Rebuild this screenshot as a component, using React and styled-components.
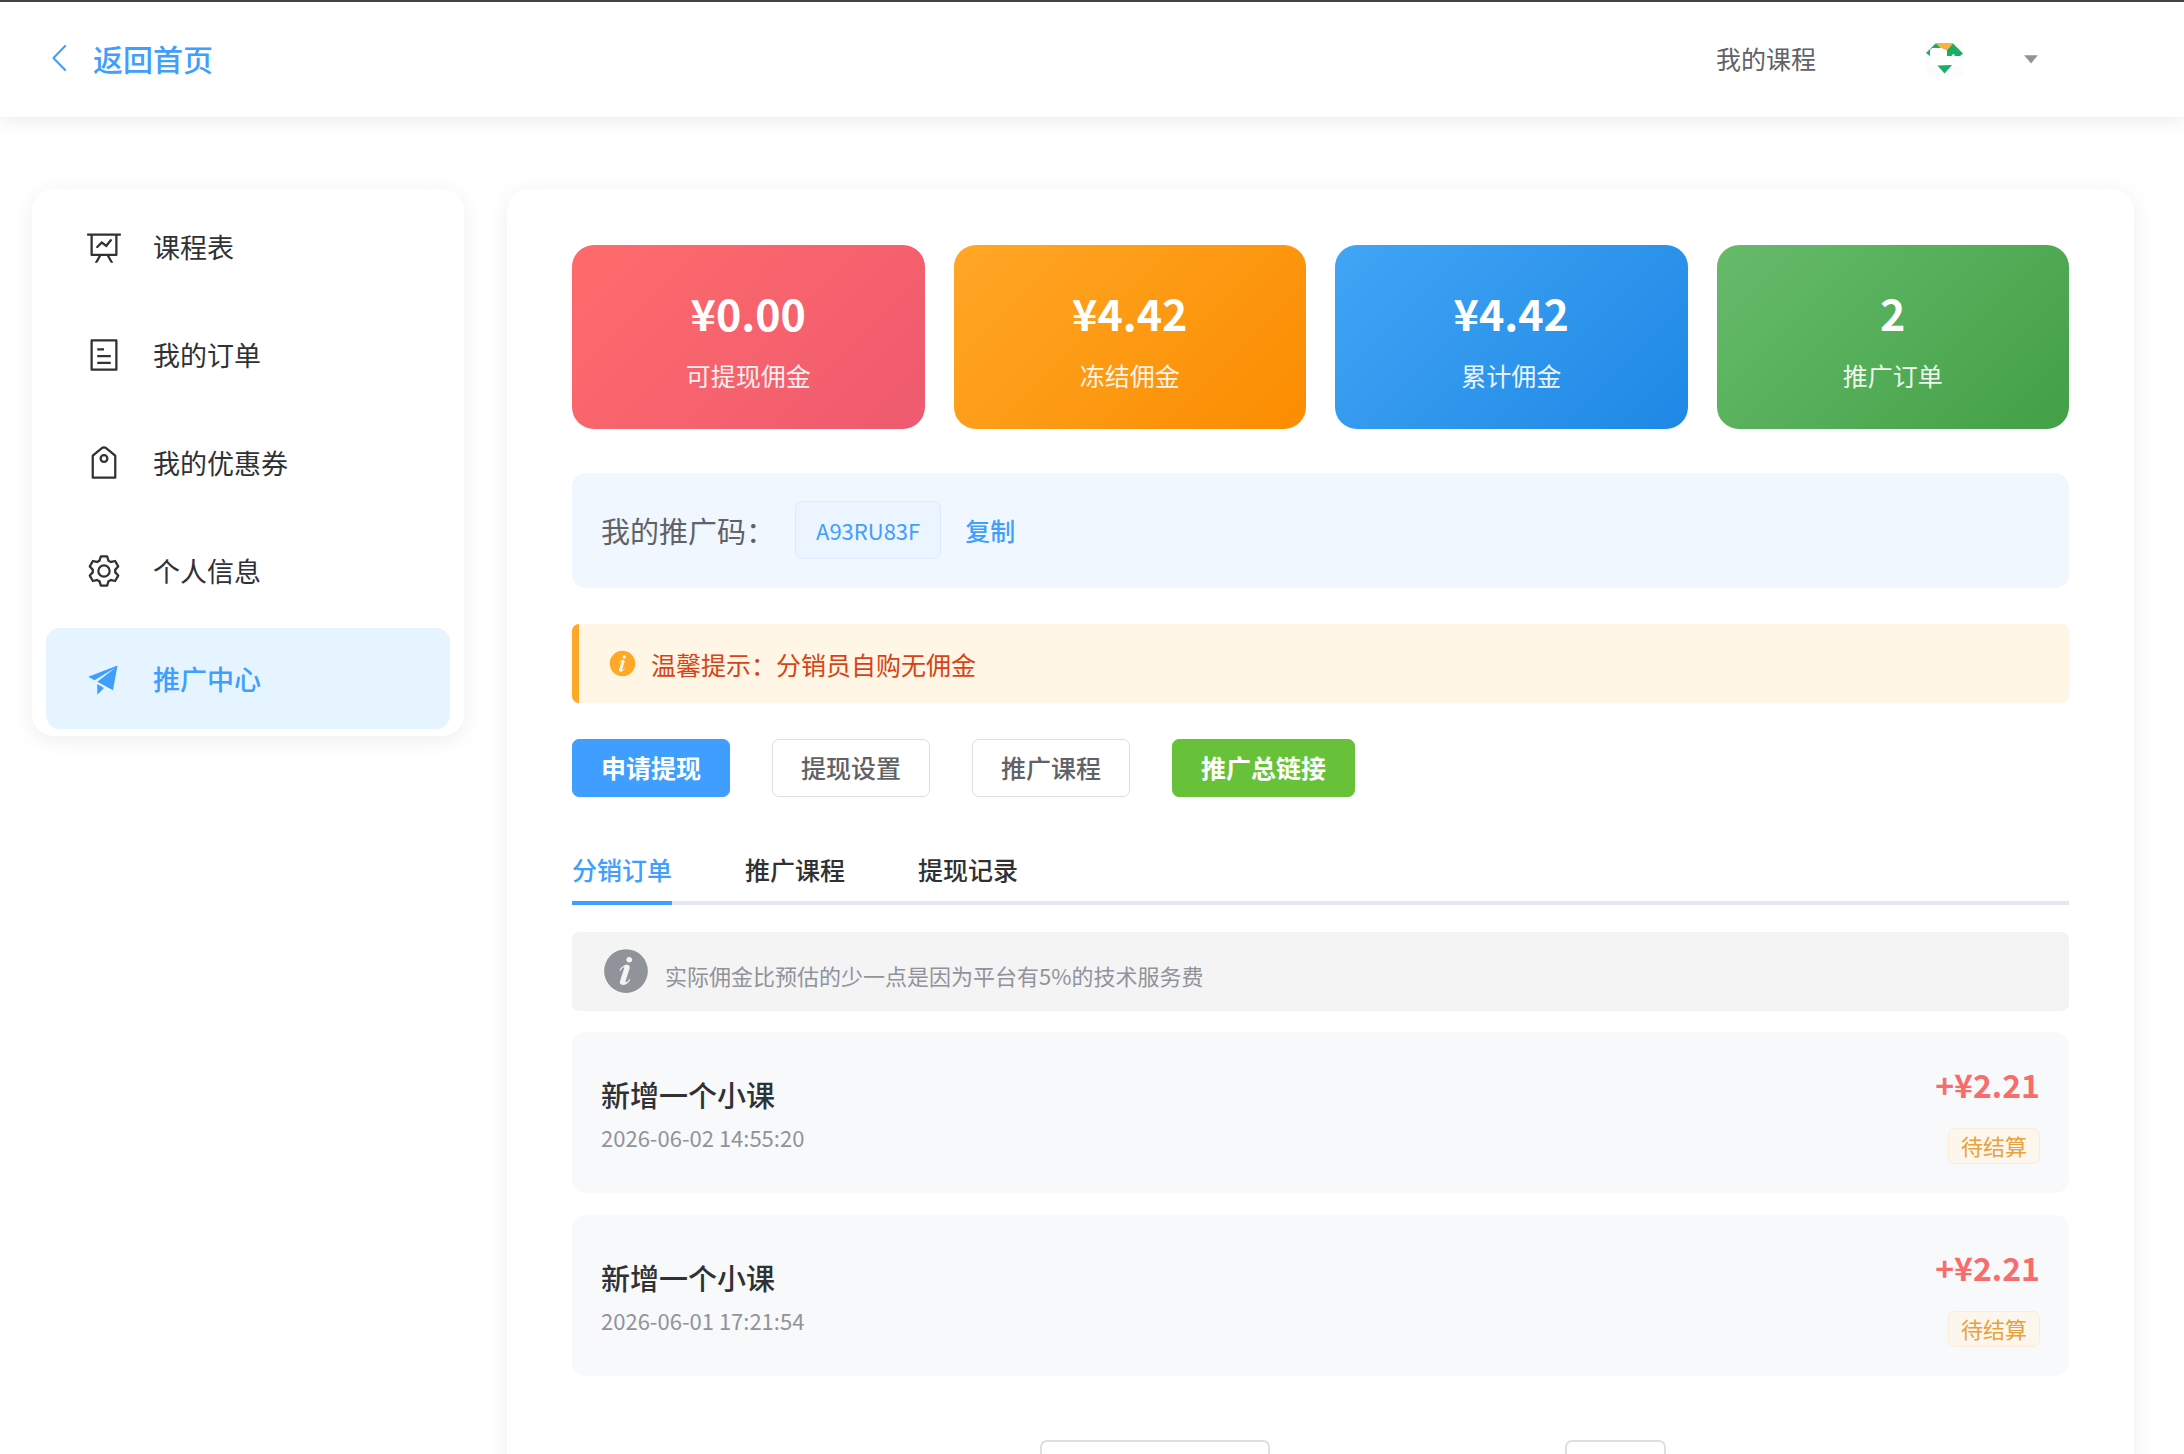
import { useState } from "react";
import styled, { createGlobalStyle, css } from "styled-components";

const GlobalStyle = createGlobalStyle`
  * {
    box-sizing: border-box;
  }
  body {
    margin: 0;
    background: #fff;
    color: #303133;
    font-family: "Noto Sans CJK SC", "Noto Sans", sans-serif;
  }
  button,
  input,
  select {
    font-family: inherit;
  }
  button {
    cursor: pointer;
  }
`;

const Header = styled.header`
  display: flex;
  justify-content: space-between;
  align-items: center;
  height: 117px;
  padding: 0 142px 4px 43px;
  border-top: 2px solid #444;
  background: #fff;
  box-shadow: 0 4px 18px rgba(0, 0, 0, 0.08);
`;

const BackLink = styled.a`
  display: flex;
  align-items: center;
  gap: 14px;
  color: #409eff;
  font-size: 30px;
  font-weight: 500;
  text-decoration: none;
`;

const HeaderRight = styled.div`
  display: flex;
  align-items: center;
`;

const NavLink = styled.a`
  margin-right: 110px;
  color: #606266;
  font-size: 25px;
  text-decoration: none;
`;

const UserButton = styled.button`
  display: flex;
  align-items: center;
  gap: 57px;
  padding: 0;
  border: none;
  background: none;
  color: #909399;
`;

const Icon = styled.svg`
  flex: none;
  width: ${(props) => props.$size}px;
  height: ${(props) => props.$size}px;
  fill: currentColor;
`;

const Layout = styled.div`
  display: flex;
  align-items: flex-start;
  gap: 43px;
  padding: 72px 50px 0 32px;
`;

const cardShadow = css`
  background: #fff;
  border-radius: 22px;
  box-shadow: 0 4px 22px rgba(0, 0, 0, 0.07);
`;

const Sidebar = styled.nav`
  ${cardShadow}
  display: flex;
  flex-direction: column;
  flex: none;
  gap: 7px;
  width: 432px;
  padding: 7px 14px;
`;

const MenuItem = styled.a`
  display: flex;
  align-items: center;
  gap: 31px;
  height: 101px;
  padding: 0 40px;
  border-radius: 14px;
  background: ${(props) => (props.$active ? "#e6f4ff" : "transparent")};
  color: ${(props) => (props.$active ? "#409eff" : "#303133")};
  font-size: 27px;
  font-weight: ${(props) => (props.$active ? 500 : 400)};
  text-decoration: none;
`;

const Panel = styled.main`
  ${cardShadow}
  flex: 1;
  min-width: 0;
  padding: 56px 65px;
`;

const Stats = styled.div`
  display: grid;
  grid-template-columns: repeat(4, 1fr);
  gap: 29px;
  margin-bottom: 44px;
`;

const StatCard = styled.div`
  display: flex;
  flex-direction: column;
  gap: 14px;
  padding: 36px;
  border-radius: 22px;
  background: linear-gradient(
    135deg,
    ${(props) => props.$from},
    ${(props) => props.$to}
  );
  color: #fff;
  text-align: center;
`;

const StatValue = styled.div`
  font-size: 43px;
  font-weight: 700;
  line-height: 62px;
`;

const StatLabel = styled.div`
  font-size: 25px;
  line-height: 36px;
  opacity: 0.9;
`;

const CodeBar = styled.div`
  display: flex;
  align-items: center;
  height: 115px;
  margin-bottom: 36px;
  padding: 0 29px 2px;
  border-radius: 14px;
  background: #f0f7ff;
`;

const CodeLabel = styled.span`
  margin-right: 20px;
  color: #606266;
  font-size: 29px;
`;

const CodeTag = styled.span`
  display: flex;
  align-items: center;
  height: 58px;
  padding: 0 20px;
  border: 1px solid #d9ecff;
  border-radius: 7px;
  background: #ecf5ff;
  color: #409eff;
  font-size: 22px;
`;

const CopyButton = styled.button`
  margin-left: 24px;
  padding: 0;
  border: none;
  background: none;
  color: #409eff;
  font-size: 25px;
  font-weight: 500;
`;

const Tip = styled.div`
  display: flex;
  align-items: center;
  gap: 14px;
  height: 79px;
  margin-bottom: 36px;
  padding: 0 29px;
  border-left: 7px solid #ffa726;
  border-radius: 7px;
  background: #fff6e5;
  color: #ffa726;
`;

const TipText = styled.span`
  color: #d84315;
  font-size: 25px;
`;

const Actions = styled.div`
  display: flex;
  gap: 42px;
  margin-bottom: 36px;
`;

const ActionButton = styled.button`
  height: 58px;
  padding: 0 28px 2px;
  border: 1px solid ${(props) => props.$color || "#dcdfe6"};
  border-radius: 7px;
  background: ${(props) => props.$color || "#fff"};
  color: ${(props) => (props.$color ? "#fff" : "#606266")};
  font-size: 25px;
  font-weight: ${(props) => (props.$color ? 700 : 500)};
`;

const Tabs = styled.div`
  display: flex;
  gap: 73px;
  height: 72px;
  margin-bottom: 27px;
  box-shadow: inset 0 -4px #e4e7ed;
`;

const Tab = styled.button`
  padding: 0;
  border: none;
  background: none;
  box-shadow: ${(props) => (props.$active ? "inset 0 -4px #409eff" : "none")};
  color: ${(props) => (props.$active ? "#409eff" : "#303133")};
  font-size: 25px;
  font-weight: 500;
`;

const Note = styled.div`
  display: flex;
  align-items: center;
  gap: 14px;
  height: 79px;
  margin-bottom: 21px;
  padding: 0 29px 2px;
  border-radius: 7px;
  background: #f4f4f5;
  color: #909399;
`;

const NoteText = styled.p`
  margin: 0;
  padding-top: 8px;
  font-size: 22px;
`;

const Orders = styled.ul`
  display: flex;
  flex-direction: column;
  gap: 22px;
  margin: 0 0 64px;
  padding: 0;
  list-style: none;
`;

const Order = styled.li`
  display: flex;
  justify-content: space-between;
  align-items: center;
  padding: 29px;
  border-radius: 14px;
  background: #f8f9fb;
`;

const OrderTitle = styled.div`
  margin-bottom: 7px;
  font-size: 29px;
  font-weight: 500;
  line-height: 42px;
`;

const OrderTime = styled.div`
  color: #909399;
  font-size: 22px;
  line-height: 30px;
`;

const OrderRight = styled.div`
  display: flex;
  flex-direction: column;
  align-items: flex-end;
  gap: 20px;
`;

const Amount = styled.div`
  color: #f96c6c;
  font-size: 32px;
  font-weight: 700;
  line-height: 47px;
`;

const Status = styled.span`
  padding: 0 12px 2px;
  border: 1px solid #faecd8;
  border-radius: 7px;
  background: #fdf6ec;
  color: #e6a23c;
  font-size: 22px;
  line-height: 32px;
`;

const Pagination = styled.div`
  display: flex;
  justify-content: center;
  gap: 295px;
  padding-left: 65px;
`;

const field = css`
  height: 58px;
  border: 2px solid #dcdfe6;
  border-radius: 7px;
  background: #fff;
  color: #606266;
  font-size: 25px;
`;

const PageSize = styled.select`
  ${field}
  width: 230px;
  padding: 0 20px;
  appearance: none;
`;

const PageInput = styled.input`
  ${field}
  width: 101px;
  text-align: center;
`;

const icons = {
  back: "M609.408 149.376 277.76 489.6a32 32 0 0 0 0 44.672l331.648 340.352a29.12 29.12 0 0 0 41.728 0 30.592 30.592 0 0 0 0-42.752L339.264 511.936l311.872-319.872a30.592 30.592 0 0 0 0-42.688 29.12 29.12 0 0 0-41.728 0z",
  caret: "m192 384 320 384 320-384z",
  board:
    "M32 128h960v64H32zM192 192v512h640V192zm-64-64h768v608a32 32 0 0 1-32 32H160a32 32 0 0 1-32-32zM322.176 960H248.32l144.64-250.56 55.424 32zm453.888 0h-73.856L576 741.44l55.424-32zM342.656 534.656a32 32 0 1 1-45.312-45.312L444.992 341.76l125.44 94.08L679.04 300.032a32 32 0 1 1 49.92 39.936L581.632 524.224 451.008 426.24 342.656 534.592z",
  tickets:
    "M192 128v768h640V128zm-32-64h704a32 32 0 0 1 32 32v832a32 32 0 0 1-32 32H160a32 32 0 0 1-32-32V96a32 32 0 0 1 32-32m160 448h384v64H320zm0-192h192v64H320zm0 384h384v64H320z",
  priceTag:
    "M224 318.336V896h576V318.336L552.512 115.84a64 64 0 0 0-81.024 0zM593.024 66.304l259.2 212.096A32 32 0 0 1 864 303.168V928a32 32 0 0 1-32 32H192a32 32 0 0 1-32-32V303.168a32 32 0 0 1 11.712-24.768l259.2-212.096a128 128 0 0 1 162.112 0zM512 448a64 64 0 1 0 0-128 64 64 0 0 0 0 128m0 64a128 128 0 1 1 0-256 128 128 0 0 1 0 256",
  setting:
    "M600.704 64a32 32 0 0 1 30.464 22.208l35.2 109.376c14.784 7.232 28.928 15.36 42.432 24.512l112.384-24.192a32 32 0 0 1 34.432 15.36L944.32 364.8a32 32 0 0 1-4.032 37.504l-77.12 85.12a357.12 357.12 0 0 1 0 49.024l77.12 85.248a32 32 0 0 1 4.032 37.504l-88.704 153.6a32 32 0 0 1-34.432 15.296L708.8 803.904c-13.44 9.088-27.648 17.28-42.368 24.512l-35.264 109.376A32 32 0 0 1 600.704 960H423.296a32 32 0 0 1-30.464-22.208L357.696 828.48a351.616 351.616 0 0 1-42.56-24.64l-112.32 24.256a32 32 0 0 1-34.432-15.36L79.68 659.2a32 32 0 0 1 4.032-37.504l77.12-85.248a357.12 357.12 0 0 1 0-48.896l-77.12-85.248A32 32 0 0 1 79.68 364.8l88.704-153.6a32 32 0 0 1 34.432-15.296l112.32 24.256c13.568-9.152 27.776-17.408 42.56-24.64l35.2-109.312A32 32 0 0 1 423.232 64H600.64zm-23.424 64H446.72l-36.352 113.088-24.512 11.968a294.113 294.113 0 0 0-34.816 20.096l-22.656 15.36-116.224-25.088-65.28 113.152 79.68 88.192-1.92 27.136a293.12 293.12 0 0 0 0 40.192l1.92 27.136-79.808 88.192 65.344 113.152 116.224-25.024 22.656 15.296a294.113 294.113 0 0 0 34.816 20.096l24.512 11.968L446.72 896h130.688l36.48-113.152 24.448-11.904a288.282 288.282 0 0 0 34.752-20.096l22.592-15.296 116.288 25.024 65.28-113.152-79.744-88.192 1.92-27.136a293.12 293.12 0 0 0 0-40.256l-1.92-27.136 79.808-88.128-65.344-113.152-116.288 24.96-22.592-15.232a287.616 287.616 0 0 0-34.752-20.096l-24.448-11.904L577.344 128zM512 320a192 192 0 1 1 0 384 192 192 0 0 1 0-384m0 64a128 128 0 1 0 0 256 128 128 0 0 0 0-256",
  promotion:
    "m64 448 832-320-128 704-446.08-243.328L832 192 242.816 545.472zm256 512V657.024L512 768z",
  info: "M512 64a448 448 0 1 1 0 896.064A448 448 0 0 1 512 64m67.2 275.072c33.28 0 60.288-23.104 60.288-57.344s-27.072-57.344-60.288-57.344c-33.28 0-60.16 23.104-60.16 57.344s26.88 57.344 60.16 57.344M590.912 699.2c0-6.848 2.368-24.64 1.024-34.752l-52.608 60.544c-10.88 11.456-24.512 19.392-30.912 17.28a12.992 12.992 0 0 1-8.256-14.72l87.68-276.992c7.168-35.136-12.544-67.2-54.336-71.296-44.096 0-108.992 44.736-148.48 101.504 0 6.784-1.28 23.68.064 33.792l52.544-60.608c10.88-11.328 23.552-19.328 29.952-17.152a12.8 12.8 0 0 1 7.808 16.128L388.48 728.576c-10.048 32.256 8.96 63.872 55.04 71.04 67.84 0 107.904-43.648 147.456-100.416z",
};

const menu = [
  { id: 1, icon: "board", name: "课程表" },
  { id: 2, icon: "tickets", name: "我的订单" },
  { id: 3, icon: "priceTag", name: "我的优惠券" },
  { id: 4, icon: "setting", name: "个人信息" },
  { id: 5, icon: "promotion", name: "推广中心", active: true },
];

const stats = [
  { id: 1, value: "¥0.00", label: "可提现佣金", from: "#ff6b6b", to: "#ee5a6f" },
  { id: 2, value: "¥4.42", label: "冻结佣金", from: "#ffa726", to: "#fb8c00" },
  { id: 3, value: "¥4.42", label: "累计佣金", from: "#42a5f5", to: "#1e88e5" },
  { id: 4, value: "2", label: "推广订单", from: "#66bb6a", to: "#43a047" },
];

const actions = [
  { id: 1, name: "申请提现", color: "#409eff" },
  { id: 2, name: "提现设置" },
  { id: 3, name: "推广课程" },
  { id: 4, name: "推广总链接", color: "#67c23a" },
];

const tabs = ["分销订单", "推广课程", "提现记录"];

const orders = [
  { id: 1, title: "新增一个小课", time: "2026-06-02 14:55:20", amount: "+¥2.21", status: "待结算" },
  { id: 2, title: "新增一个小课", time: "2026-06-01 17:21:54", amount: "+¥2.21", status: "待结算" },
];

const SvgIcon = ({ name, size }) => (
  <Icon $size={size} viewBox="0 0 1024 1024" aria-hidden="true">
    <path d={icons[name]} />
  </Icon>
);

const Logo = () => (
  <svg width="37" height="37" viewBox="0 0 37 37" aria-hidden="true">
    <path d="M0 0h37v37H0z" fill="#fcfcfc" />
    <path
      d="M3.5 9H15l6 1v7h14v9.5H3.5z"
      fill="#fff"
    />
    <path
      d="M9.5 4.5H27L37 14.5 34 17h-5.5v-2l-2 .5-1 1.5H21v-6l-5-2H6L4 11v6L0 14z"
      fill="#1aad66"
    />
    <path d="M10 4.5h17L21.5 11 16 9h-1.5z" fill="#fbb040" />
    <path d="M11.5 26.5 26 26l-7.500 8.500z" fill="#1aad66" />
  </svg>
);

export default function App() {
  const [tab, setTab] = useState(tabs[0]);

  return (
    <>
      <GlobalStyle />
      <Header>
        <BackLink href="#">
          <SvgIcon name="back" size={36} />
          返回首页
        </BackLink>
        <HeaderRight>
          <NavLink href="#">我的课程</NavLink>
          <UserButton type="button" aria-label="用户菜单">
            <Logo />
            <SvgIcon name="caret" size={22} />
          </UserButton>
        </HeaderRight>
      </Header>
      <Layout>
        <Sidebar>
          {menu.map((data) => (
            <MenuItem key={data.id} href="#" $active={data.active}>
              <SvgIcon name={data.icon} size={36} />
              {data.name}
            </MenuItem>
          ))}
        </Sidebar>
        <Panel>
          <Stats>
            {stats.map((data) => (
              <StatCard key={data.id} $from={data.from} $to={data.to}>
                <StatValue>{data.value}</StatValue>
                <StatLabel>{data.label}</StatLabel>
              </StatCard>
            ))}
          </Stats>
          <CodeBar>
            <CodeLabel>我的推广码：</CodeLabel>
            <CodeTag>A93RU83F</CodeTag>
            <CopyButton type="button">复制</CopyButton>
          </CodeBar>
          <Tip>
            <SvgIcon name="info" size={29} />
            <TipText>温馨提示：分销员自购无佣金</TipText>
          </Tip>
          <Actions>
            {actions.map((data) => (
              <ActionButton key={data.id} type="button" $color={data.color}>
                {data.name}
              </ActionButton>
            ))}
          </Actions>
          <Tabs role="tablist">
            {tabs.map((name) => (
              <Tab
                key={name}
                type="button"
                role="tab"
                aria-selected={name === tab}
                $active={name === tab}
                onClick={() => setTab(name)}
              >
                {name}
              </Tab>
            ))}
          </Tabs>
          <Note>
            <SvgIcon name="info" size={50} />
            <NoteText>实际佣金比预估的少一点是因为平台有5%的技术服务费</NoteText>
          </Note>
          <Orders>
            {orders.map((data) => (
              <Order key={data.id}>
                <div>
                  <OrderTitle>{data.title}</OrderTitle>
                  <OrderTime>{data.time}</OrderTime>
                </div>
                <OrderRight>
                  <Amount>{data.amount}</Amount>
                  <Status>{data.status}</Status>
                </OrderRight>
              </Order>
            ))}
          </Orders>
          <Pagination>
            <PageSize aria-label="每页条数">
              <option>10条/页</option>
            </PageSize>
            <PageInput aria-label="页码" defaultValue="1" />
          </Pagination>
        </Panel>
      </Layout>
    </>
  );
}
